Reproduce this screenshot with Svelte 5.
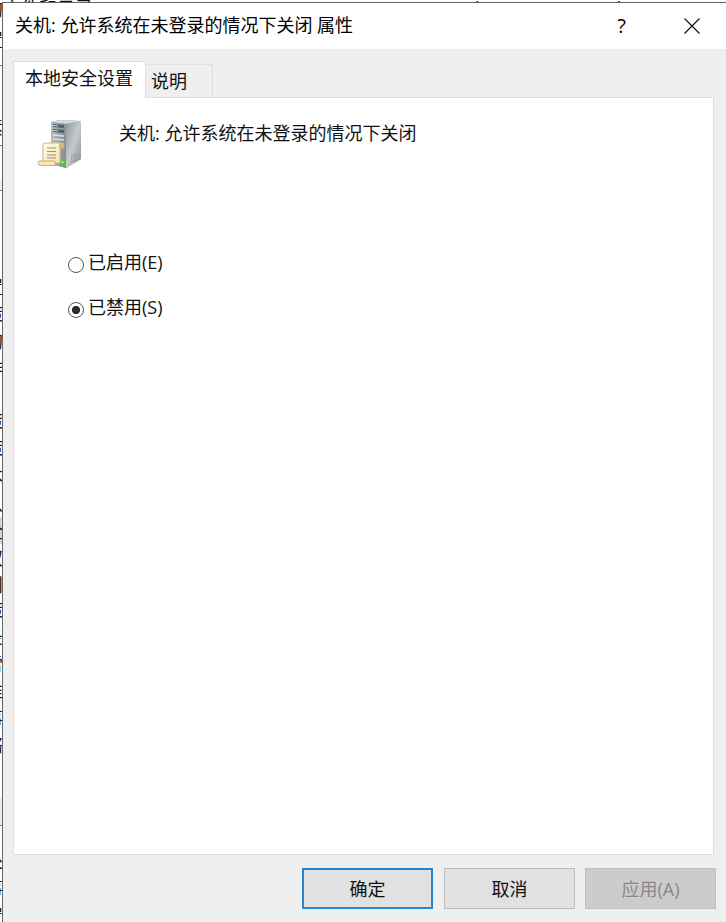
<script>
	const policyName = "关机: 允许系统在未登录的情况下关闭";

	let activeTab = $state("local");
	let setting = $state("disabled");

	const tabs = [
		{ id: "local", label: "本地安全设置" },
		{ id: "explain", label: "说明" }
	];

	const options = [
		{ value: "enabled", label: "已启用(E)" },
		{ value: "disabled", label: "已禁用(S)" }
	];

	// Text of the window behind, only its edge shows beside the dialog
	const behindRows = [
		{ y: 10, text: "的" },
		{ y: 41, text: "置" },
		{ y: 128, text: "素" },
		{ y: 288, text: "置" },
		{ y: 315, text: "策" },
		{ y: 342, text: "的" },
		{ y: 369, text: "排" },
		{ y: 422, text: "策" },
		{ y: 449, text: "策" },
		{ y: 476, text: "木" },
		{ y: 505, text: "从" },
		{ y: 532, text: "全" },
		{ y: 559, text: "双" },
		{ y: 586, text: "则" },
		{ y: 611, text: "策" },
		{ y: 638, text: "录" },
		{ y: 665, text: "雷" },
		{ y: 692, text: "谁" },
		{ y: 719, text: "事" },
		{ y: 746, text: "络" },
		{ y: 862, text: "处" },
		{ y: 889, text: "事" },
		{ y: 917, text: "置" }
	];

	const behindLines = [65, 145, 190, 825];
</script>

<div class="screen">
	<div class="behind">
		<span class="behind-top left">文件和目录</span>
		<span class="behind-top right">Administrators,Backup</span>
		<div class="edge">
			<span class="shade" style="top: 180px; height: 10px"></span>
			<span class="shade selected" style="top: 517px; height: 27px"></span>
			<span class="shade" style="top: 798px; height: 27px"></span>
			{#each behindLines as y}
				<span class="line" style="top: {y}px"></span>
			{/each}
			{#each behindRows as row}
				<span class="peek" style="top: {row.y - 14}px">{row.text}</span>
			{/each}
		</div>
	</div>

	<section class="dialog">
		<header class="titlebar">
			<h1>{policyName} 属性</h1>
			<button class="caption help" aria-label="帮助">?</button>
			<button class="caption close" aria-label="关闭">
				<svg width="16" height="16" viewBox="0 0 16 16">
					<path d="M.5.5l15 15M15.5.5l-15 15" fill="none" stroke="#111" stroke-width="1.15" />
				</svg>
			</button>
		</header>

		<div class="body">
			<nav class="tabs">
				{#each tabs as tab}
					<button class="tab" class:active={activeTab === tab.id} onclick={() => (activeTab = tab.id)}>
						{tab.label}
					</button>
				{/each}
			</nav>

			<div class="panel">
				<div class="policy">
					<svg class="server" width="48" height="52" viewBox="0 0 48 52">
						<defs>
							<linearGradient id="side" x1="0" y1="0" x2="1" y2="1">
								<stop offset="0" stop-color="#8f9599" />
								<stop offset=".5" stop-color="#c6cbce" />
								<stop offset="1" stop-color="#858c90" />
							</linearGradient>
							<linearGradient id="front" x1="0" y1="0" x2="1" y2="0">
								<stop offset="0" stop-color="#b4bcc1" />
								<stop offset="1" stop-color="#848e95" />
							</linearGradient>
							<linearGradient id="paper" x1="0" y1="0" x2="1" y2="1">
								<stop offset="0" stop-color="#fffbe8" />
								<stop offset="1" stop-color="#f3e2ab" />
							</linearGradient>
						</defs>
						<path d="M14 4l9-2 21 1v38L29 50l-15-4z" fill="#899297" />
						<path d="M14 4l9-2 21 1-15 3z" fill="#d5dadd" />
						<path d="M29 6l15-3v38l-15 9z" fill="url(#side)" />
						<path d="M14 4l15 2v44l-15-4z" fill="url(#front)" />
						<path d="M16 6l11 1v3l-11-1zM16 11l11 1v3l-11-1z" fill="#53606a" />
						<path d="M16 17l11 1M16 21l11 1M16 25l11 1" stroke="#dce3e7" stroke-width="1.3" />
						<path d="M16 7.500l5 .5M16 12.500l5 .5" stroke="#c5dbe6" />
						<path d="M34 38l6-2M34 41l6-3M34 44l6-3" stroke="#777f83" stroke-dasharray="1.2 1" />
						<circle cx="26" cy="45" r="3" fill="#57c232" />
						<circle cx="25.5" cy="44" r="1.3" fill="#a9ec75" />
						<path d="M6 27q0-2 2.500-2H24q3 0 3 2.500V30h-4v15H6z" fill="url(#paper)" stroke="#d2b878" />
						<path d="M22 30v-2.500q0-2.500 2.500-2.500T27 27.500V30z" fill="#d5b66f" />
						<path d="M3 43h15q-1 4.500 3 4.500H3.500Q1 47.500 1 45t2-2z" fill="#f8e8b1" stroke="#cbb070" />
						<path d="M10 30h9M10 33.500h9M10 37h9M10 40h9" stroke="#94928e" stroke-width="1.2" />
					</svg>
					<p>{policyName}</p>
				</div>

				<div class="options">
					{#each options as option}
						<label>
							<input type="radio" name="setting" value={option.value} bind:group={setting} />
							<span>{option.label}</span>
						</label>
					{/each}
				</div>
			</div>

			<footer class="actions">
				<button class="btn default">确定</button>
				<button class="btn">取消</button>
				<button class="btn" disabled>应用(A)</button>
			</footer>
		</div>
	</section>
</div>

<style>
	:global(body) {
		margin: 0;
		background: #fff;
	}

	.screen {
		position: relative;
		box-sizing: border-box;
		width: 726px;
		height: 922px;
		padding: 2px 0 0 2px;
		overflow: hidden;
		color: #111;
		font-family: "Open Sans", "Noto Sans CJK SC", sans-serif;
		font-size: 18px;
		line-height: 26px;
	}

	button {
		padding: 0;
		border: 0;
		background: none;
		color: inherit;
		font: inherit;
	}

	.behind {
		position: absolute;
		inset: 0;
		overflow: hidden;
		white-space: nowrap;
	}

	.behind-top {
		position: absolute;
		top: -5px;
	}

	.behind-top.left {
		left: 3px;
	}

	.behind-top.right {
		left: 457px;
	}

	.edge {
		position: absolute;
		inset: 0 auto 0 0;
		width: 2px;
		overflow: hidden;
	}

	.peek {
		position: absolute;
		left: -15px;
	}

	.shade,
	.line {
		position: absolute;
		left: 0;
		width: 2px;
		background: #ececec;
	}

	.shade.selected {
		background: #d5d5d5;
	}

	.line {
		height: 1px;
		background: #777;
	}

	.dialog {
		position: relative;
		display: flex;
		box-sizing: border-box;
		height: 920px;
		flex-direction: column;
		border-top: 1px solid #666;
		border-left: 1px solid #666;
		background: #efefef;
	}

	.titlebar {
		display: flex;
		height: 46px;
		align-items: center;
		background: #fff;
		color: #000;
	}

	h1 {
		flex: 1;
		margin: 0 0 2px 12px;
		font-size: 18px;
		font-weight: 400;
	}

	.caption {
		display: grid;
		width: 70px;
		height: 46px;
		place-items: center;
	}

	.help {
		padding-left: 1px;
		font-size: 20px;
	}

	.close {
		padding-left: 1px;
	}

	.body {
		display: flex;
		flex: 1;
		flex-direction: column;
		padding: 12px 10px 13px;
	}

	.tabs {
		display: flex;
		height: 36px;
		align-items: flex-end;
	}

	.tab {
		box-sizing: border-box;
		width: 67px;
		height: 33px;
		padding-right: 20px;
		border: 1px solid #e0e0e0;
		border-width: 1px 1px 0 0;
	}

	.tab.active {
		position: relative;
		width: 133px;
		height: 37px;
		margin-bottom: -1px;
		padding: 0 1px 4px 0;
		border-left-width: 1px;
		background: #fff;
	}

	.panel {
		box-sizing: border-box;
		width: 701px;
		height: 758px;
		border: 1px solid #e0e0e0;
		background: #fff;
	}

	.policy {
		display: flex;
		gap: 34px;
		padding: 20px 0 0 23px;
	}

	.policy p {
		margin: 2px 0 0;
	}

	.options {
		display: grid;
		gap: 19px;
		justify-items: start;
		padding: 79px 0 0 54px;
	}

	label {
		display: flex;
		gap: 4px;
	}

	input {
		box-sizing: border-box;
		width: 16px;
		height: 16px;
		margin: 8px 0 0;
		border: 1px solid #555;
		border-radius: 50%;
		appearance: none;
		background: #fff;
	}

	input:checked {
		background: radial-gradient(circle, #2b2b2b 3.700px, #fff 4.500px);
	}

	.actions {
		display: flex;
		justify-content: flex-end;
		gap: 11px;
		margin: 13px 0 0;
	}

	.btn {
		box-sizing: border-box;
		width: 131px;
		height: 41px;
		border: 1px solid #bdbdbd;
		background: #e1e1e1;
	}

	.btn.default {
		margin-right: -1px;
		border: 2px solid #2485d2;
	}

	.btn:nth-child(2) {
		margin-left: 1px;
		margin-right: -1px;
	}

	.btn:disabled {
		border-color: #bfbfbf;
		background: #ccc;
		color: #888;
	}
</style>
